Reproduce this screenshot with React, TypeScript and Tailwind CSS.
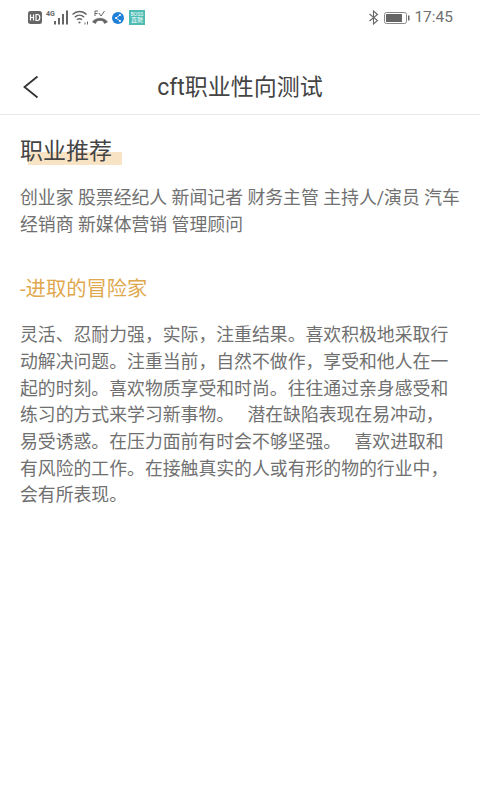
const font = "font-['Roboto','Noto_Sans_CJK_SC',sans-serif]";

const StatusBar = () => (
  <div className="flex h-[35px] items-center justify-between pl-[28px] pr-[27px] text-[#666]">
    <div className="flex items-center">
      <svg width="14" height="13" viewBox="0 0 14 13">
        <rect width="14" height="13" rx="2.5" fill="#666" />
        <path d="M2.5 3.5v6M2.5 6.5h3M5.5 3.5v6" stroke="#fff" strokeWidth="1.2" fill="none" />
        <path d="M8 3.5v6h1.5c3 0 3-6 0-6z" stroke="#fff" strokeWidth="1.2" fill="none" />
      </svg>
      <svg className="ml-[4px]" width="22" height="15" viewBox="0 0 22 15" fill="#666">
        <text x="0" y="6" fontSize="7" fontWeight="700" fontFamily="Roboto">4G</text>
        <rect x="8" y="11" width="2" height="3.500" />
        <rect x="12" y="8" width="2" height="6.500" />
        <rect x="16" y="4" width="2" height="10.500" />
        <rect x="20" y="0.500" width="2" height="14" />
      </svg>
      <svg className="ml-[4px]" width="17" height="15" viewBox="0 0 17 15" fill="none" stroke="#666" strokeWidth="1.5">
        <path d="M0.500 4.500c4-4 10-4 14 0M2.800 7.200c2.800-2.600 6.600-2.600 9.400 0M5 9.800c1.500-1.300 3.500-1.300 5 0" />
        <circle cx="7.500" cy="12.500" r="1.100" fill="#666" stroke="none" />
        <path d="M13 12.500v2M15.500 11.500v3" strokeWidth="1" />
      </svg>
      <svg className="ml-[3px]" width="16" height="15" viewBox="0 0 16 15" fill="none" stroke="#666">
        <path d="M3 1v5M3 1h3M3 3.500h2.500M7 3l2 3 3.500-5" strokeWidth="1" />
        <path d="M0.500 12c3-5 12-5 15 0l-3 1.500-1.500-2.500c-2-.7-4-.7-6 0l-1.500 2.500z" fill="#666" strokeWidth="0.6" />
      </svg>
      <svg className="ml-[4px]" width="12" height="12" viewBox="0 0 12 12">
        <circle cx="6" cy="6" r="6" fill="#1e7fd6" />
        <path d="M8 3L4 6l4 3" stroke="#fff" strokeWidth="0.9" fill="none" />
        <circle cx="8" cy="3" r="1" fill="#fff" />
        <circle cx="4" cy="6" r="1" fill="#fff" />
        <circle cx="8" cy="9" r="1" fill="#fff" />
      </svg>
      <div className="ml-[5px] flex h-[15px] w-[16px] flex-col items-center justify-center bg-[#4dbdb4] text-[5px] leading-[5px] text-white">
        <span>BOSS</span>
        <span className="text-[6px] leading-[6px]">直聘</span>
      </div>
    </div>
    <div className="flex items-center gap-[4px]">
      <svg width="11" height="15" viewBox="0 0 11 15" fill="none" stroke="#666" strokeWidth="1.1">
        <path d="M1.500 4l8 6.500L5.500 14V1l4 3.500-8 6.500" />
      </svg>
      <svg width="26" height="12" viewBox="0 0 26 12" className="ml-[1px]">
        <rect x="0.500" y="0.500" width="22" height="11" rx="2" fill="none" stroke="#888" />
        <rect x="2" y="2" width="16" height="8" rx="0.500" fill="#666" />
        <rect x="24" y="3.500" width="1.500" height="5" fill="#666" />
      </svg>
      <span className="text-[15.500px] leading-none text-[#707070]">17:45</span>
    </div>
  </div>
);

const Header = () => (
  <div className="relative flex h-[80px] items-end justify-center border-b border-[#e8e8e8] pb-[10px]">
    <svg className="absolute bottom-[15px] left-[22px]" width="18" height="24" viewBox="0 0 18 24" fill="none" stroke="#333" strokeWidth="1.8">
      <path d="M15.500 1.500L2.500 12l13 10.500" />
    </svg>
    <span className="text-[23px] leading-[32px] text-[#444]">cft职业性向测试</span>
  </div>
);

export default function App() {
  return (
    <div className={`${font} h-[800px] w-[480px] bg-white`}>
      <StatusBar />
      <Header />
      <div className="pl-5 pr-[19px]">
        <div className="relative mt-[20px] h-[34px]">
          <div className="absolute left-[8px] top-[17px] h-[13px] w-[94px] bg-[#f8e3c5]" />
          <h2 className="relative text-[23px] leading-[34px] text-[#444]">职业推荐</h2>
        </div>
        <p className="mt-[16px] text-[17.850px] leading-[26.670px] text-[#707070]">
          创业家 股票经纪人 新闻记者 财务主管 主持人/演员 汽车经销商 新媒体营销 管理顾问
        </p>
        <h3 className="mt-[36px] text-[20.300px] leading-[30px] text-[#e0a84e]">-进取的冒险家</h3>
        <p className="mt-[18px] whitespace-pre-wrap text-[17.850px] leading-[26.670px] text-[#707070]">
          灵活、忍耐力强，实际，注重结果。喜欢积极地采取行动解决问题。注重当前，自然不做作，享受和他人在一起的时刻。喜欢物质享受和时尚。往往通过亲身感受和练习的方式来学习新事物。   潜在缺陷表现在易冲动，易受诱惑。在压力面前有时会不够坚强。   喜欢进取和有风险的工作。在接触真实的人或有形的物的行业中，会有所表现。
        </p>
      </div>
    </div>
  );
}
